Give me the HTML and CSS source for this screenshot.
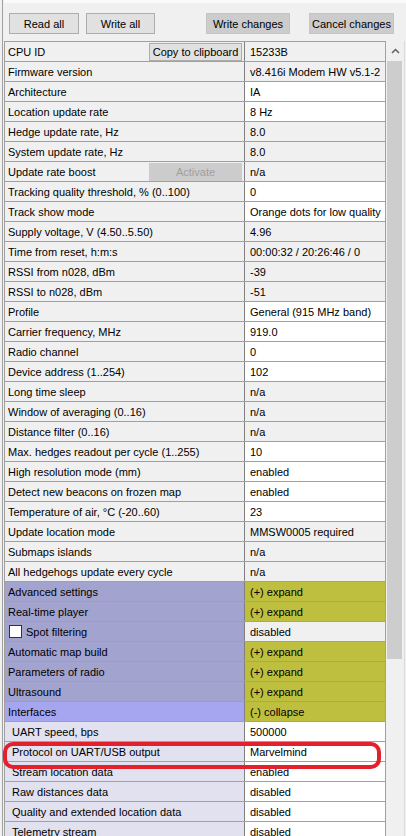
FILE: index.html
```html
<!DOCTYPE html>
<html lang="en">
<head>
  <meta charset="UTF-8">
  <meta name="viewport" content="width=device-width, initial-scale=1.0">
  <title>Modem settings</title>
  <link rel="stylesheet" href="styles.css">
</head>
<body>
  <div class="window">
    <div class="toolbar">
      <button class="btn btn-read">Read all</button>
      <button class="btn btn-write">Write all</button>
      <button class="btn btn-dark btn-changes">Write changes</button>
      <button class="btn btn-dark btn-cancel">Cancel changes</button>
    </div>

    <div class="main">
      <div class="grid">
        <div class="row"><div class="label">CPU ID <span class="cell-btn">Copy to clipboard</span></div><div class="value ro">15233B</div></div>
        <div class="row"><div class="label">Firmware version</div><div class="value ro">v8.416i Modem HW v5.1-2</div></div>
        <div class="row"><div class="label">Architecture</div><div class="value">IA</div></div>
        <div class="row"><div class="label">Location update rate</div><div class="value">8 Hz</div></div>
        <div class="row"><div class="label">Hedge update rate, Hz</div><div class="value ro">8.0</div></div>
        <div class="row"><div class="label">System update rate, Hz</div><div class="value ro">8.0</div></div>
        <div class="row"><div class="label">Update rate boost <span class="cell-btn disabled">Activate</span></div><div class="value ro">n/a</div></div>
        <div class="row"><div class="label">Tracking quality threshold, % (0..100)</div><div class="value">0</div></div>
        <div class="row"><div class="label">Track show mode</div><div class="value">Orange dots for low quality</div></div>
        <div class="row"><div class="label">Supply voltage, V (4.50..5.50)</div><div class="value ro">4.96</div></div>
        <div class="row"><div class="label">Time from reset, h:m:s</div><div class="value ro">00:00:32 / 20:26:46 / 0</div></div>
        <div class="row"><div class="label">RSSI from n028, dBm</div><div class="value ro">-39</div></div>
        <div class="row"><div class="label">RSSI to n028, dBm</div><div class="value ro">-51</div></div>
        <div class="row"><div class="label">Profile</div><div class="value">General (915 MHz band)</div></div>
        <div class="row"><div class="label">Carrier frequency, MHz</div><div class="value">919.0</div></div>
        <div class="row"><div class="label">Radio channel</div><div class="value">0</div></div>
        <div class="row"><div class="label">Device address (1..254)</div><div class="value">102</div></div>
        <div class="row"><div class="label">Long time sleep</div><div class="value ro">n/a</div></div>
        <div class="row"><div class="label">Window of averaging (0..16)</div><div class="value ro">n/a</div></div>
        <div class="row"><div class="label">Distance filter (0..16)</div><div class="value ro">n/a</div></div>
        <div class="row"><div class="label">Max. hedges readout per cycle (1..255)</div><div class="value">10</div></div>
        <div class="row"><div class="label">High resolution mode (mm)</div><div class="value">enabled</div></div>
        <div class="row"><div class="label">Detect new beacons on frozen map</div><div class="value">enabled</div></div>
        <div class="row"><div class="label">Temperature of air, °C (-20..60)</div><div class="value">23</div></div>
        <div class="row"><div class="label">Update location mode</div><div class="value ro">MMSW0005 required</div></div>
        <div class="row"><div class="label">Submaps islands</div><div class="value ro">n/a</div></div>
        <div class="row"><div class="label">All hedgehogs update every cycle</div><div class="value ro">n/a</div></div>

        <div class="row group"><div class="label">Advanced settings</div><div class="value">(+) expand</div></div>
        <div class="row group"><div class="label">Real-time player</div><div class="value">(+) expand</div></div>
        <div class="row group"><div class="label"><span class="check"></span>Spot filtering</div><div class="value ro">disabled</div></div>
        <div class="row group"><div class="label">Automatic map build</div><div class="value">(+) expand</div></div>
        <div class="row group"><div class="label">Parameters of radio</div><div class="value">(+) expand</div></div>
        <div class="row group"><div class="label">Ultrasound</div><div class="value">(+) expand</div></div>
        <div class="row group open"><div class="label">Interfaces</div><div class="value">(-) collapse</div></div>
        <div class="row sub"><div class="label">UART speed, bps</div><div class="value">500000</div></div>
        <div class="row sub"><div class="label">Protocol on UART/USB output</div><div class="value">Marvelmind</div></div>
        <div class="row sub"><div class="label">Stream location data</div><div class="value">enabled</div></div>
        <div class="row sub"><div class="label">Raw distances data</div><div class="value">disabled</div></div>
        <div class="row sub"><div class="label">Quality and extended location data</div><div class="value">disabled</div></div>
        <div class="row sub"><div class="label">Telemetry stream</div><div class="value">disabled</div></div>
      </div>

      <div class="scrollbar">
        <div class="arrow">
          <svg width="9" height="6" viewBox="0 0 9 6"><polyline points="1,5 4.5,1.5 8,5" fill="none" stroke="#606060" stroke-width="1.5"/></svg>
        </div>
        <div class="thumb"></div>
      </div>
    </div>

    <div class="mark"></div>
  </div>
</body>
</html>
```

FILE: styles.css
```css
body {
  margin: 0;
  background: #f0f0f0;
  font-family: "Liberation Sans", Arial, sans-serif;
  font-size: 11px;
  color: #000;
  overflow: hidden;
}

.window {
  position: relative;
  margin-left: 2px;
  border-left: 1px solid #a0a0a0;
  height: 836px;
  padding-left: 1px;
}

.toolbar {
  display: flex;
  height: 41px;
  padding: 13px 0 0 5px;
  box-sizing: border-box;
  background: linear-gradient(#fafafa 0, #fafafa 3px, #f0f0f0 3px);
}

.btn {
  height: 21px;
  padding: 0;
  border: 1px solid #adadad;
  background: #e1e1e1;
  font-family: inherit;
  font-size: 11px;
  color: #000;
}

.btn-read { width: 70px; }
.btn-write { width: 69px; margin-left: 7px; }
.btn-changes { width: 84px; margin-left: 51px; }
.btn-cancel { width: 85px; margin-left: 19px; }

.btn-dark {
  background: #cccccc;
  border-color: #c4c4c4;
}

.main {
  display: flex;
}

.grid {
  width: 382px;
  border-left: 1px solid #a0a0a0;
  border-top: 1px solid #a0a0a0;
  box-sizing: border-box;
  border-right: 1px solid #a0a0a0;
}

.row {
  display: grid;
  grid-template-columns: 239px 1fr;
  height: 20px;
  border-bottom: 1px solid #a0a0a0;
  box-sizing: border-box;
}

.label {
  display: flex;
  align-items: center;
  justify-content: space-between;
  padding-left: 3px;
  background: #f0f0f0;
  white-space: nowrap;
  overflow: hidden;
}

.value {
  display: flex;
  align-items: center;
  padding-left: 5px;
  border-left: 1px solid #808080;
  background: #fff;
  white-space: nowrap;
  overflow: hidden;
}

.value.ro {
  background: #f0f0f0;
}

.cell-btn {
  display: flex;
  align-items: center;
  justify-content: center;
  width: 93px;
  height: 18px;
  margin-right: 2px;
  border: 1px solid #adadad;
  background: #e1e1e1;
  box-sizing: border-box;
}

.cell-btn.disabled {
  background: #cccccc;
  border-color: #cccccc;
  color: #a0a0a0;
}

.group .label {
  background: #a3a3cf;
  justify-content: flex-start;
}

.group .value {
  background: #bfbf3f;
}

.group .value.ro {
  background: #f0f0f0;
}

.group.open .label {
  background: #a6a6f0;
}

.sub .label {
  background: #e1e1f0;
  padding-left: 7px;
}

.check {
  width: 11px;
  height: 11px;
  margin: 0 4px 0 1px;
  border: 1px solid #333;
  background: #fff;
}

.scrollbar {
  width: 17px;
  height: 795px;
  margin-left: 1px;
  background: #f0f0f0;
  border-right: 1px solid #dcdcdc;
}

.arrow {
  display: flex;
  align-items: center;
  justify-content: center;
  height: 20px;
}

.thumb {
  width: 15px;
  height: 598px;
  background: #cdcdcd;
}

.mark {
  position: absolute;
  left: 0;
  top: 742px;
  width: 370px;
  height: 19px;
  border: 4px solid #e3202b;
  border-radius: 10px;
}
```
